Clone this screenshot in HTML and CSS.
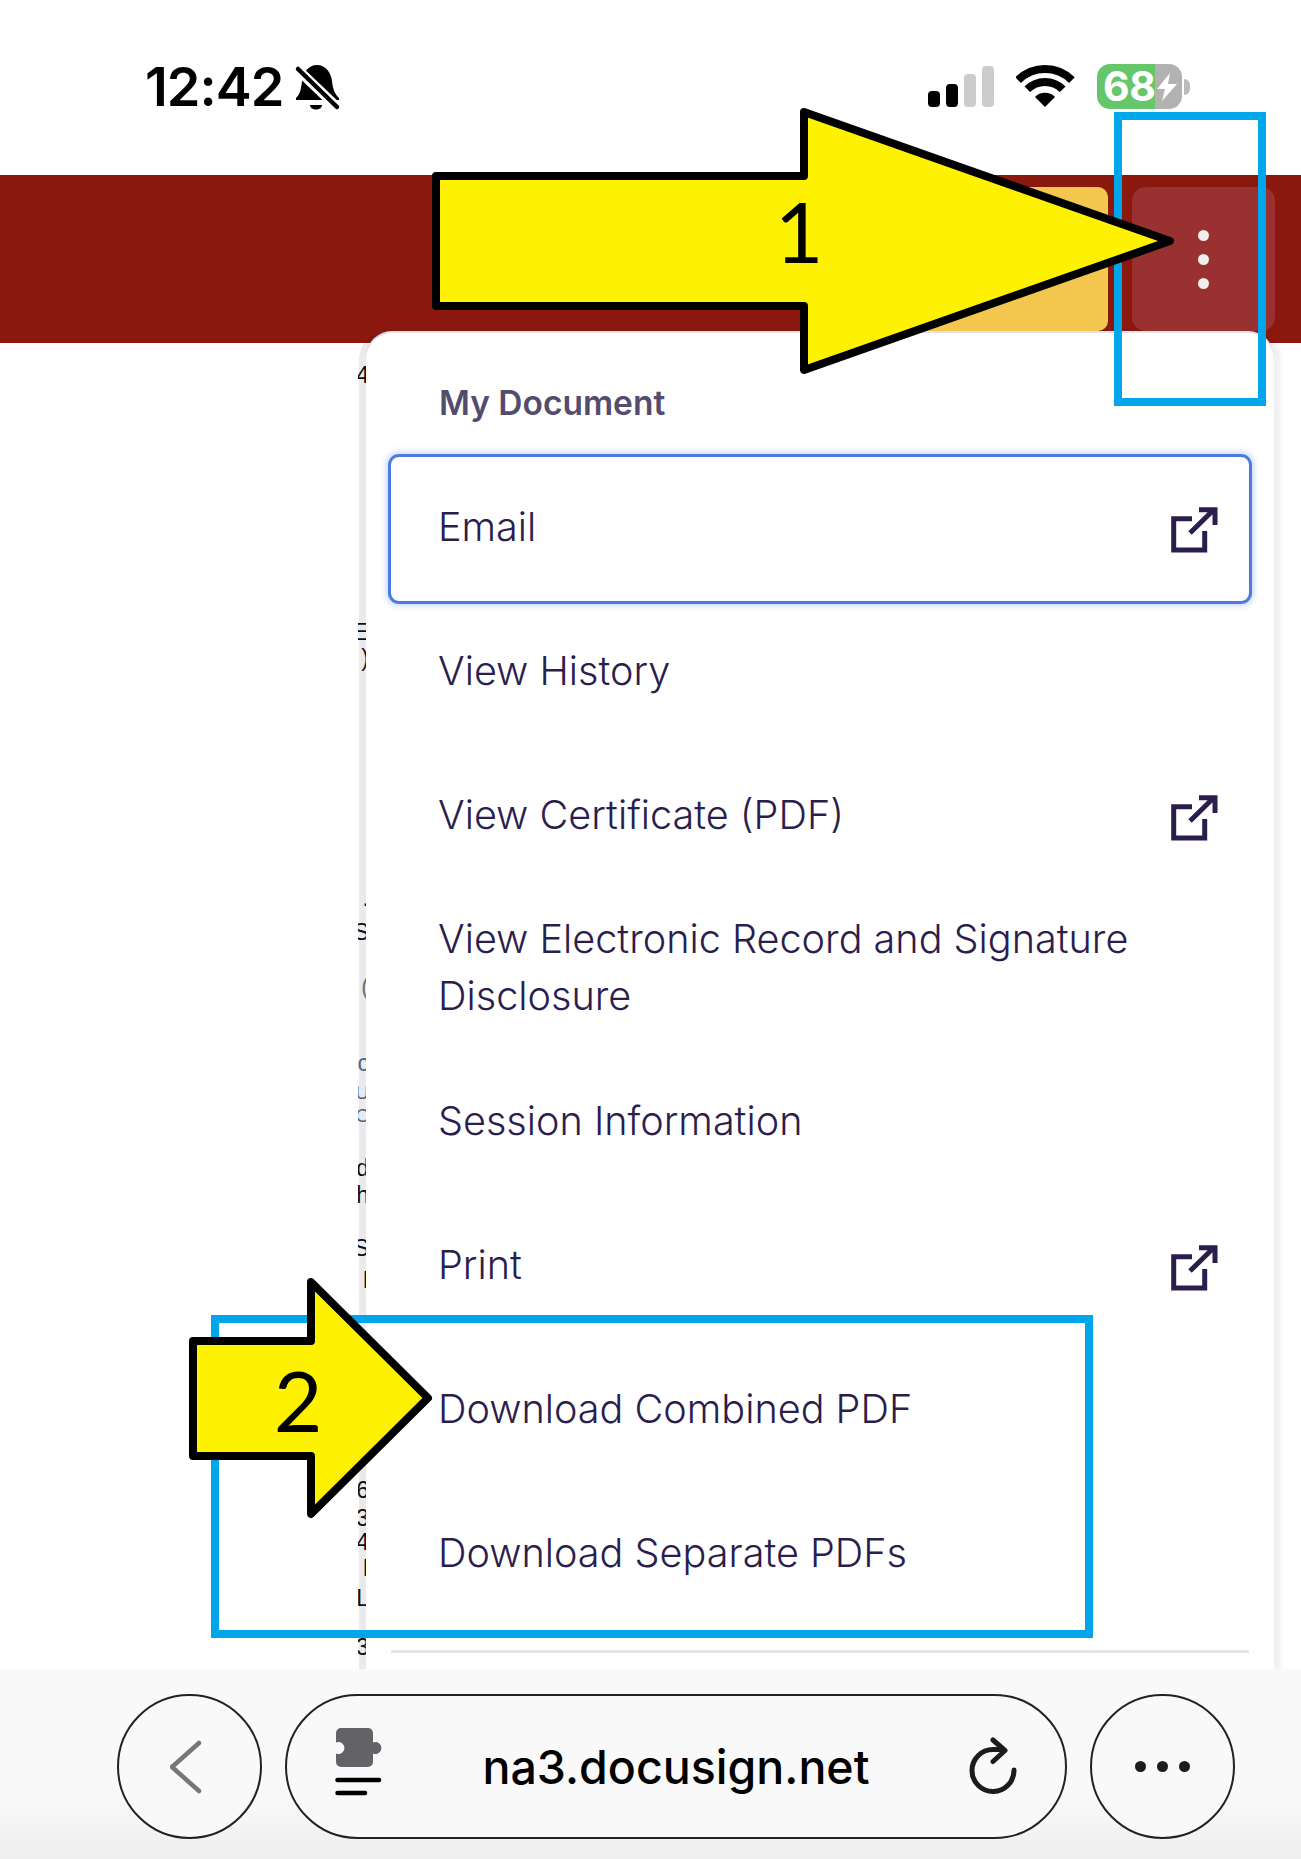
FILE: index.html
```html
<!DOCTYPE html>
<html lang="en">
<head>
<meta charset="utf-8">
<title>Docusign menu</title>
<link rel="stylesheet" href="styles.css">
</head>
<body>
<div class="page">
  <div class="status">
    <div class="status-left">
      <span class="time">12:42</span>
      <svg class="bell" viewBox="0 0 65 65"><path class="fill-k" d="M33 9C42 9 47 17 48 25C49 34 51 38 55 42V44H12V42C16 38 17 34 18 25C19 17 24 9 33 9Z"/><path class="fill-k" d="M26 49H38C38 55 26 55 26 49Z"/><path class="bell-gap" d="M10 10L56 54"/><path class="bell-slash" d="M14 13L53 51"/></svg>
    </div>
    <div class="status-right">
      <div class="signal"><i class="b1"></i><i class="b2"></i><i class="b3"></i><i class="b4"></i></div>
      <svg class="wifi" viewBox="0 0 60 45"><path class="wifi-arc" d="M2.1 16.1A38 38 0 0 1 55.9 16.1"/><path class="wifi-arc" d="M11.3 25.3A25 25 0 0 1 46.7 25.3"/><path class="fill-k" d="M29 43L19 33A14 14 0 0 1 39 33Z"/></svg>
      <div class="battery-wrap">
        <div class="battery"><span class="batt-num">68</span><svg class="bolt" viewBox="0 0 20 28"><path d="M13 0L0 16H8L5 28L20 11H11Z"/></svg></div>
        <i class="nub"></i>
      </div>
    </div>
  </div>

  <header class="topbar">
    <div class="btn-finish"></div>
    <div class="btn-more"><i></i><i></i><i></i></div>
  </header>

  <main class="content">
    <div class="doc">
      <span class="frag k m22">4</span>
      <span class="frag k m237">E</span>
      <span class="frag k m6">)</span>
      <span class="frag k m220">.</span>
      <span class="frag k m14">S</span>
      <span class="frag g m35">(</span>
      <span class="frag b m56">c</span>
      <span class="frag b pair m8">U<br>C</span>
      <span class="frag k m31">d</span>
      <span class="frag k m7">h</span>
      <span class="frag k m33">S</span>
      <span class="frag k m12">I</span>
      <span class="frag k m190">6</span>
      <span class="frag k m8">3</span>
      <span class="frag k m4">4</span>
      <span class="frag k m6">I</span>
      <span class="frag k m10">L</span>
      <span class="frag k m29">3</span>
    </div>
    <nav class="menu">
      <div class="menu-title">My Document</div>
      <div class="item focus"><span>Email</span><svg class="ext" viewBox="0 0 50 50"><path d="M23 14.7H4.7V46H35.7V27"/><path d="M21 29L45 5.5M30 5.7H46V21"/></svg></div>
      <div class="item"><span>View History</span></div>
      <div class="item"><span>View Certificate (PDF)</span><svg class="ext" viewBox="0 0 50 50"><path d="M23 14.7H4.7V46H35.7V27"/><path d="M21 29L45 5.5M30 5.7H46V21"/></svg></div>
      <div class="item"><span>View Electronic Record and Signature Disclosure</span></div>
      <div class="item"><span>Session Information</span></div>
      <div class="item"><span>Print</span><svg class="ext" viewBox="0 0 50 50"><path d="M23 14.7H4.7V46H35.7V27"/><path d="M21 29L45 5.5M30 5.7H46V21"/></svg></div>
      <div class="item"><span>Download Combined PDF</span></div>
      <div class="item"><span>Download Separate PDFs</span></div>
      <div class="divider"></div>
    </nav>
  </main>

  <footer class="browser">
    <div class="round">
      <svg class="chev" viewBox="0 0 40 54"><path d="M29 3L2 27L29 51"/></svg>
    </div>
    <div class="pill">
      <svg class="puzzle" viewBox="0 0 50 81"><path class="puz" d="M8 2H35A5 5 0 0 1 40 7V16.5A6 6 0 1 1 40 27.5V36A5 5 0 0 1 35 41H8A5 5 0 0 1 3 36V27.5A6 6 0 1 0 3 16.5V7A5 5 0 0 1 8 2Z"/><path class="puz-line" d="M4.5 54H46M4.5 67H32"/></svg>
      <span class="url">na3.docusign.net</span>
      <svg class="reload" viewBox="0 0 50 60"><path d="M45 33A21 21 0 1 1 24 12.5H34M24 3L36 13.5L24 24.5"/></svg>
    </div>
    <div class="round dots"><i></i><i></i><i></i></div>
  </footer>

  <svg class="annot" viewBox="0 0 1301 1859">
    <rect class="callout" x="1118" y="116" width="144" height="286"/>
    <rect class="callout" x="215" y="1319" width="874" height="315"/>
    <polygon class="arrow" points="436,176 804,176 804,112 1170,241 804,370 804,306 436,306"/>
    <polygon class="arrow" points="193,1341 311,1341 311,1282 428,1398 311,1514 311,1456 193,1456"/>
    <text class="num" x="799" y="263">1</text>
    <text class="num" x="298" y="1432">2</text>
  </svg>
</div>
</body>
</html>
```
FILE: styles.css
```css
* { box-sizing: border-box; }
html, body { margin: 0; padding: 0; background: #fff; }
.page { position: relative; width: 1301px; height: 1859px; overflow: hidden; display: flex; flex-direction: column; font-family: "Inter", "Liberation Sans", sans-serif; }

.status { height: 175px; flex: none; display: flex; justify-content: space-between; align-items: center; padding: 0 111px 2px 145px; background: #fff; }
.status-left { display: flex; align-items: center; gap: 1px; padding-top: 1px; }
.time { font-size: 54px; font-weight: 600; line-height: 60px; color: #000; letter-spacing: -1px; }
.bell { width: 65px; height: 65px; display: block; margin-top: 2px; }
.fill-k { fill: #000; }
.bell-gap { stroke: #fff; stroke-width: 10; fill: none; }
.bell-slash { stroke: #000; stroke-width: 4.5; fill: none; stroke-linecap: round; }
.status-right { display: flex; align-items: center; }
.signal { display: flex; align-items: flex-end; gap: 6px; height: 41px; margin-right: 22px; }
.signal i { display: block; width: 12px; border-radius: 4px; background: #000; }
.signal .b1 { height: 16px; }
.signal .b2 { height: 23px; }
.signal .b3 { height: 33px; background: #ccc; }
.signal .b4 { height: 41px; background: #ccc; }
.wifi { width: 60px; height: 45px; display: block; margin-right: 21px; }
.wifi-arc { fill: none; stroke: #000; stroke-width: 8; }
.battery-wrap { display: flex; align-items: center; gap: 2px; }
.battery { position: relative; width: 85px; height: 45px; border-radius: 13px; background: linear-gradient(to right, #66c76a 68%, #b2b2b2 68%); display: flex; align-items: center; padding-left: 6px; color: #fff; }
.batt-num { font-size: 41px; font-weight: 700; line-height: 45px; letter-spacing: -0.5px; }
.bolt { width: 20px; height: 28px; margin-left: 2px; fill: #fff; display: block; }
.nub { display: block; width: 6px; height: 16px; background: #bbb; border-radius: 0 8px 8px 0; }

.topbar { height: 168px; flex: none; background: #8b180f; display: flex; justify-content: flex-end; align-items: center; gap: 24px; padding-right: 26px; }
.btn-finish { width: 290px; height: 144px; border-radius: 10px; background: #f3c74e; }
.btn-more { width: 143px; height: 144px; border-radius: 14px; background: #983130; display: flex; flex-direction: column; align-items: center; justify-content: center; gap: 13px; }
.btn-more i { display: block; width: 11px; height: 11px; border-radius: 50%; background: #eee; }

.content { position: relative; flex: 1; background: #fff; }
.doc { width: 369px; display: flex; flex-direction: column; align-items: flex-end; clip-path: inset(0 0 0 358px); }
.frag { display: block; font-family: "Liberation Sans", sans-serif; font-size: 23px; line-height: 20px; text-align: right; }
.frag.pair { font-size: 19px; line-height: 23px; }
.frag.k { color: #111; }
.frag.g { color: #777; }
.frag.b { color: #5a6a8a; }
.m4 { margin-top: 4px; } .m6 { margin-top: 6px; } .m7 { margin-top: 7px; } .m8 { margin-top: 8px; }
.m10 { margin-top: 10px; } .m12 { margin-top: 12px; } .m14 { margin-top: 14px; } .m22 { margin-top: 22px; }
.m29 { margin-top: 29px; } .m31 { margin-top: 31px; } .m33 { margin-top: 33px; } .m35 { margin-top: 35px; } .m56 { margin-top: 56px; }
.m190 { margin-top: 190px; } .m220 { margin-top: 220px; } .m237 { margin-top: 237px; }

.menu { position: absolute; left: 366px; top: -10px; width: 908px; height: 1400px; background: #fff; border-radius: 26px 26px 0 0; box-shadow: -7px 0 0 0 rgba(20,20,50,.09), 7px 0 4px 0 rgba(20,20,50,.06), 0 -2px 0 0 #e8e8ee; padding: 0 25px; color: #2b1e4d; }
.menu-title { height: 124px; padding: 50px 0 0 48px; font-size: 33.5px; font-weight: 600; line-height: 40px; color: #544c6e; }
.item { min-height: 144px; display: flex; align-items: center; justify-content: space-between; padding: 22px 30px 26px 47px; font-size: 39.6px; font-weight: 350; line-height: 57px; color: #2b1e4d; }
.item span { max-width: 760px; }
.item.focus { border-radius: 8px; box-shadow: 0 0 0 3px #4d7ae0, 0 0 6px 5px rgba(77,122,224,.3); }
.ext { width: 50px; height: 50px; flex: none; fill: none; stroke: #2b1e4d; stroke-width: 5; margin-top: 4px; }
.divider { height: 3px; margin: 23px 0 0; background: #e5e5ea; }

.browser { position: relative; z-index: 2; height: 190px; flex: none; display: flex; gap: 23px; padding: 25px 0 0 117px; background: linear-gradient(#f9f9f9 0 70%, #eeeeee); }
.round { width: 145px; height: 145px; flex: none; border: 2px solid #222; border-radius: 50%; background: #f9f9f9; display: flex; align-items: center; justify-content: center; }
.chev { width: 40px; height: 54px; fill: none; stroke: #777; stroke-width: 4.5; stroke-linecap: round; stroke-linejoin: round; }
.dots { gap: 11px; }
.dots i { display: block; width: 11px; height: 11px; border-radius: 50%; background: #1c1c1e; }
.pill { width: 782px; height: 145px; flex: none; border: 2px solid #222; border-radius: 73px; background: #f9f9f9; display: flex; align-items: center; justify-content: space-between; padding: 0 46px 0 46px; }
.puzzle { width: 50px; height: 81px; display: block; }
.puz { fill: #636267; }
.puz-line { fill: none; stroke: #000; stroke-width: 4.5; stroke-linecap: round; }
.url { font-size: 46.5px; font-weight: 500; color: #000; line-height: 60px; }
.reload { width: 50px; height: 60px; display: block; fill: none; stroke: #1c1c1e; stroke-width: 5; stroke-linecap: round; stroke-linejoin: round; }

.annot { position: absolute; left: 0; top: 0; width: 1301px; height: 1859px; z-index: 5; pointer-events: none; }
.callout { fill: none; stroke: #00a6ea; stroke-width: 8; }
.arrow { fill: #fff200; stroke: #000; stroke-width: 8; stroke-linejoin: round; }
.num { font-family: "Lato", sans-serif; font-size: 84px; text-anchor: middle; fill: #000; }
```
